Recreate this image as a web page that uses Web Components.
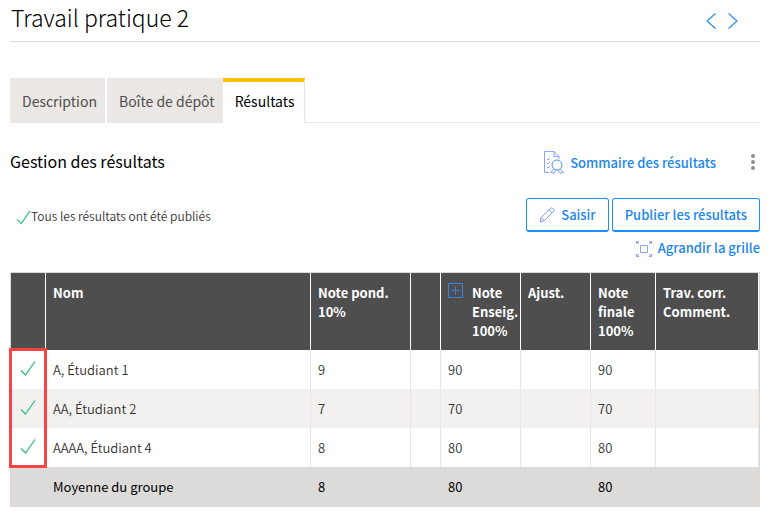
<!DOCTYPE html>
<html lang="fr">
<head>
<meta charset="utf-8">
<title>Travail pratique 2</title>
<style>
    body {
        margin: 0;
        padding: 0 10px;
        background: #fff;
        color: #333;
        font-family: "Noto Sans CJK SC", "Noto Sans", sans-serif;
        font-size: 14px;
        line-height: 19px;
    }
</style>
</head>
<body>
<page-header heading="Travail pratique 2"></page-header>
<tab-bar>
    <tab-item>Description</tab-item>
    <tab-item>Boîte de dépôt</tab-item>
    <tab-item selected>Résultats</tab-item>
</tab-bar>
<results-toolbar>
    <span slot="title">Gestion des résultats</span>
    <span slot="summary">Sommaire des résultats</span>
    <span slot="status">Tous les résultats ont été publiés</span>
    <action-button slot="actions" icon="pencil">Saisir</action-button>
    <action-button slot="actions">Publier les résultats</action-button>
    <span slot="enlarge">Agrandir la grille</span>
</results-toolbar>
<results-grid></results-grid>

<script>
const icons = {
    check: '<svg width="16" height="17" viewBox="0 0 16 17"><path d="M1 10.5 5.5 15 15 1.5" stroke="#2ec27e" stroke-width="1.3"/></svg>',
    left: '<svg width="10" height="16" viewBox="0 0 10 16"><path d="M9.5.5 1 8l8.5 7.5" stroke="#2b8cf5" stroke-width="1.2"/></svg>',
    right: '<svg width="10" height="16" viewBox="0 0 10 16"><path d="M.5.5 9 8 .5 15.5" stroke="#2b8cf5" stroke-width="1.2"/></svg>',
    pencil: '<svg width="16" height="16" viewBox="0 0 16 16"><path d="M1 15l1.2-4.500L11.5 1.200q1.200-.8 2.300.2l.7.8q1 1.200.1 2.200L5.300 13.700zM2.200 10.500l3.100 3.200M10 2.700l3.200 3.200" stroke="#7f9dfb"/></svg>',
    summary: '<svg width="22" height="24" viewBox="0 0 22 24"><path d="M6 22.500H1.500v-21H11l5 5V9M11 1.500v5h5M4 9l1 1 2-2M4 13l1 1 2-2M4 17l1 1 2-2M11 19l-3.500 3.500 2.500-.2.500 1.500 2.500-4M17 19l3.500 3.500-2.500-.2-.5 1.500-2.500-4" stroke="#8ba4fb"/><circle cx="14" cy="15" r="5" stroke="#4d8df8"/></svg>',
    enlarge: '<svg width="16" height="16" viewBox="0 0 16 16"><path d="M4.500 4.500h7v7h-7zM.5 3V.5H3M13 .5h2.500V3M.5 13v2.500H3M13 15.500h2.500V13M.5.5 3 3M15.500.5 13 3M.5 15.500 3 13M15.500 15.500 13 13" stroke="#8ba4fb"/></svg>',
    plus: '<svg width="15" height="15" viewBox="0 0 15 15"><path d="M.5.5h14v14H.5zM7.500 3.500v8M3.500 7.500h8" stroke="#3584e4"/></svg>',
    dots: '<svg width="4" height="16" viewBox="0 0 4 16"><g fill="#8c8c8c"><circle cx="2" cy="2" r="2"/><circle cx="2" cy="8" r="2"/><circle cx="2" cy="14" r="2"/></g></svg>',
};

const baseStyle = `
    * { box-sizing: border-box; }
    svg { display: block; flex: none; fill: none; }
    a { color: #1a86f0; text-decoration: none; }
    button { font: inherit; margin: 0; padding: 0; border: 0; background: none; cursor: pointer; }
`;

class BaseElement extends HTMLElement {
    constructor() {
        super();
        this._root = this.attachShadow({ mode: 'open' });
    }

    render(style, html) {
        this._root.innerHTML = `<style>${baseStyle}${style}</style>${html}`;
    }
}

class PageHeader extends BaseElement {
    connectedCallback() {
        this.render(`
            :host {
                display: flex;
                justify-content: space-between;
                align-items: center;
                height: 42px;
                box-sizing: border-box;
                padding: 0 22px 8px 1px;
                border-bottom: 1px solid #d9d9d9;
            }
            h1 { margin: 0; font-size: 23px; line-height: 32px; font-weight: 300; color: #000; }
            nav { display: flex; gap: 12px; padding-top: 9px; }
        `, `
            <h1>${this.getAttribute('heading')}</h1>
            <nav>
                <a href="#prev" aria-label="Précédent">${icons.left}</a>
                <a href="#next" aria-label="Suivant">${icons.right}</a>
            </nav>
        `);
    }
}

class TabBar extends BaseElement {
    connectedCallback() {
        this.setAttribute('role', 'tablist');
        this.render(`
            :host {
                display: flex;
                margin-top: 36px;
                height: 45px;
                box-shadow: inset 0 -1px #e8e5e3;
            }
        `, '<slot></slot>');
    }
}

class TabItem extends BaseElement {
    connectedCallback() {
        this.render(`
            :host { display: block; }
            button {
                height: 45px;
                padding: 2px 8px 0 12px;
                border-right: 2px solid #fff;
                background: #ebe7e4;
                color: #4f4f4f;
            }
            :host([selected]) { margin-left: -2px; }
            :host([selected]) button {
                padding: 0 10px 2px 12px;
                border-top: 4px solid #ffc107;
                border-right: 1px solid #e8e5e3;
                background: #fff;
                color: #000;
            }
        `, `<button role="tab" aria-selected="${this.hasAttribute('selected')}"><slot></slot></button>`);
    }
}

class ActionButton extends BaseElement {
    connectedCallback() {
        this.render(`
            :host { display: block; }
            button {
                display: flex;
                align-items: center;
                gap: 6px;
                height: 34px;
                padding: 0 12px;
                border: 1px solid #1a8fff;
                border-bottom-width: 2px;
                border-radius: 3px;
                background: #fff;
                font-size: 13px;
                font-weight: 500;
                color: #1a86f0;
            }
        `, `<button>${icons[this.getAttribute('icon')] || ''}<slot></slot></button>`);
    }
}

class ResultsToolbar extends BaseElement {
    connectedCallback() {
        this.render(`
            :host { display: block; }
            .row { display: flex; align-items: center; justify-content: space-between; }
            .top { height: 40px; margin-top: 19px; }
            h2 { margin: 0; padding-bottom: 2px; font-size: 16px; line-height: 24px; font-weight: 400; color: #000; }
            .links, .summary, .status, .actions, .enlarge { display: flex; align-items: center; }
            .links { gap: 35px; padding-right: 5px; }
            .summary { gap: 5px; }
            .summary, .enlarge { font-size: 13px; font-weight: 500; }
            .middle { margin-top: 16px; }
            .status { font-size: 12px; font-weight: 350; padding-left: 6px; }
            .status svg { width: 15px; margin-top: 4px; }
            .actions { gap: 3px; }
            .bottom { justify-content: flex-end; height: 32px; }
            .enlarge { gap: 6px; padding-bottom: 1px; }
            .enlarge svg { margin-top: 2px; }
        `, `
            <div class="row top">
                <h2><slot name="title"></slot></h2>
                <div class="links">
                    <a class="summary" href="#sommaire">${icons.summary}<slot name="summary"></slot></a>
                    <button aria-label="Plus d'options">${icons.dots}</button>
                </div>
            </div>
            <div class="row middle">
                <div class="status">${icons.check}<slot name="status"></slot></div>
                <div class="actions"><slot name="actions"></slot></div>
            </div>
            <div class="row bottom">
                <a class="enlarge" href="#grille">${icons.enlarge}<slot name="enlarge"></slot></a>
            </div>
        `);
    }
}

const students = [
    { name: 'A, Étudiant 1', weighted: 9, grade: 90 },
    { name: 'AA, Étudiant 2', weighted: 7, grade: 70 },
    { name: 'AAAA, Étudiant 4', weighted: 8, grade: 80 },
];

class ResultsGrid extends BaseElement {
    connectedCallback() {
        const rows = students.map(s => `
            <tr>
                <td class="state">${icons.check}</td>
                <td>${s.name}</td>
                <td>${s.weighted}</td>
                <td></td>
                <td>${s.grade}</td>
                <td></td>
                <td>${s.grade}</td>
                <td></td>
            </tr>`).join('');

        this.render(`
            :host { display: block; position: relative; margin-top: 8px; }
            .frame { border: 1px solid #d9d9d9; border-bottom: 0; background: #dcdbda; }
            table { width: 100%; table-layout: fixed; border-collapse: separate; border-spacing: 0; }
            .c1 { width: 35px; }
            .c3 { width: 100px; }
            .c4 { width: 30px; }
            .c5 { width: 80px; }
            .c6 { width: 70px; }
            .c7 { width: 65px; }
            .c8 { width: 103px; }
            th, td { padding: 0 7px; text-align: left; }
            th {
                height: 77px;
                padding-top: 10px;
                vertical-align: top;
                font-size: 13px;
                font-weight: 700;
                color: #fff;
                background: #4e4e4e;
                border-right: 1px solid #fff;
            }
            th.grade { padding-right: 0; }
            .expand { display: flex; align-items: flex-start; gap: 9px; }
            td {
                height: 39px;
                font-size: 13px;
                font-weight: 350;
                background: #fff;
                border-right: 1px solid #e8e5e3;
            }
            tr:nth-child(even) td { background: #f2f1ef; }
            td.state { padding: 0 0 2px 9px; border-right-color: transparent; }
            tfoot tr td {
                height: 40px;
                padding-bottom: 2px;
                font-weight: 400;
                color: #000;
                background: #dcdbda;
                border-right-color: transparent;
            }
            .mark {
                position: absolute;
                top: 76px;
                left: -1px;
                width: 38px;
                height: 120px;
                border: 3px solid #fa4343;
                pointer-events: none;
            }
        `, `
            <div class="frame">
                <table>
                    <colgroup>
                        <col class="c1"><col class="c2"><col class="c3"><col class="c4">
                        <col class="c5"><col class="c6"><col class="c7"><col class="c8">
                    </colgroup>
                    <thead>
                        <tr>
                            <th></th>
                            <th>Nom</th>
                            <th>Note pond.<br>10%</th>
                            <th></th>
                            <th class="grade"><div class="expand">
                                <button aria-label="Détailler">${icons.plus}</button>
                                <span>Note<br>Enseig.<br>100%</span>
                            </div></th>
                            <th>Ajust.</th>
                            <th>Note<br>finale<br>100%</th>
                            <th>Trav. corr.<br>Comment.</th>
                        </tr>
                    </thead>
                    <tbody>${rows}</tbody>
                    <tfoot>
                        <tr>
                            <td></td><td>Moyenne du groupe</td><td>8</td><td></td>
                            <td>80</td><td></td><td>80</td><td></td>
                        </tr>
                    </tfoot>
                </table>
            </div>
            <div class="mark"></div>
        `);
    }
}

customElements.define('page-header', PageHeader);
customElements.define('tab-bar', TabBar);
customElements.define('tab-item', TabItem);
customElements.define('action-button', ActionButton);
customElements.define('results-toolbar', ResultsToolbar);
customElements.define('results-grid', ResultsGrid);
</script>
</body>
</html>
